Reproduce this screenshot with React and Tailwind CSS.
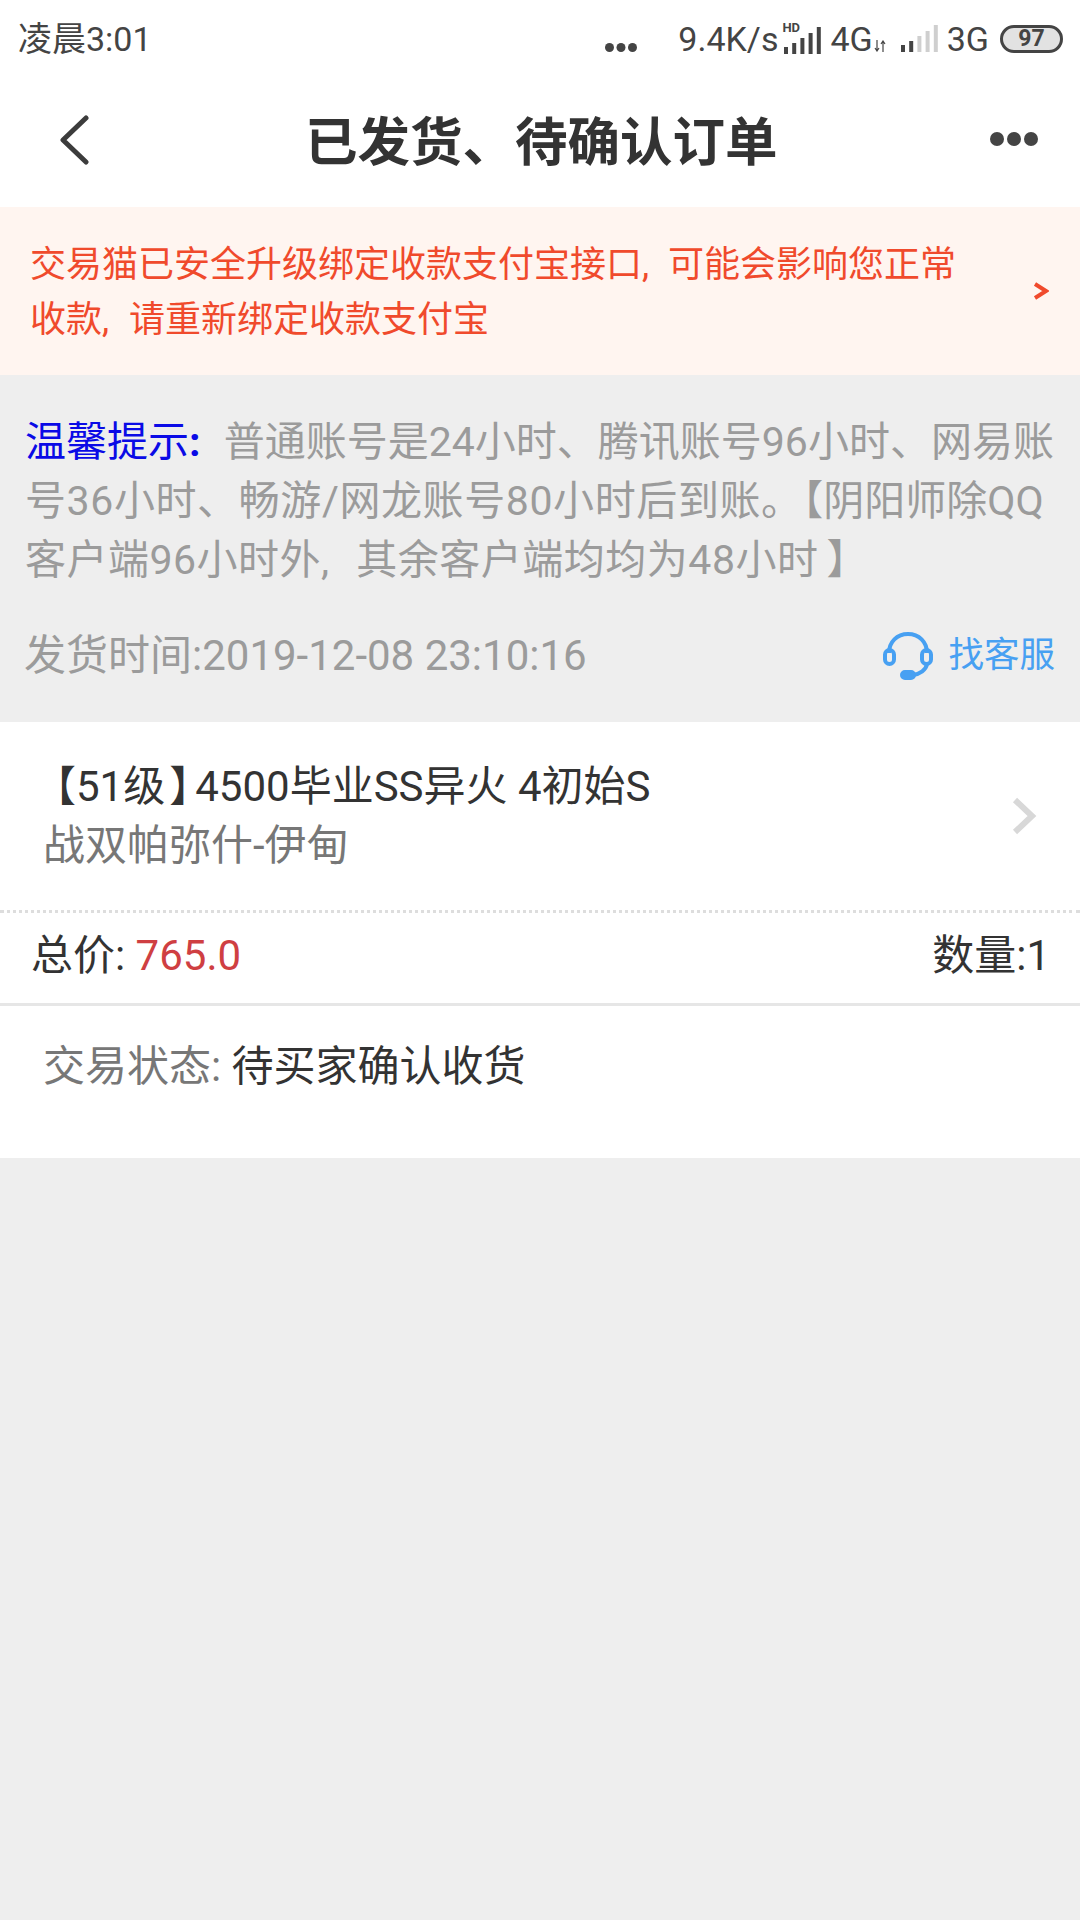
const font = { fontFamily: '"Roboto", "Noto Sans CJK SC", sans-serif' };

function Dots({ className, r, gap }) {
  const w = r * 6 + gap * 2;
  return (
    <svg className={className} width={w} height={r * 2} viewBox={`0 0 ${w} ${r * 2}`}>
      {[0, 1, 2].map((i) => (
        <circle key={i} cx={r + i * (2 * r + gap)} cy={r} r={r} fill="#444" />
      ))}
    </svg>
  );
}

function Signal({ on }) {
  const hs = [7, 11, 16, 21, 27];
  return (
    <svg width="38" height="27" viewBox="0 0 38 27">
      {hs.map((h, i) => (
        <rect key={i} x={i * 8.2} y={27 - h} width="4" height={h} fill={i < on ? "#444" : "#cfcfcf"} />
      ))}
    </svg>
  );
}

export default function App() {
  return (
    <div className="w-[1080px] h-[1920px] bg-[#eeeeee] flex flex-col" style={font}>
      <div className="h-[207px] bg-white flex flex-col">
        <div className="h-[68px] flex items-center pl-[18px] pr-[17px] text-[#444444]">
          <span className="text-[34px] leading-none mt-[9px]">凌晨3:01</span>
          <div className="ml-auto flex items-center mt-[9px]">
            <Dots r={4.5} gap={2.5} className="mr-[41px] mt-[18px]" />
            <span className="text-[34px] leading-none">9.4K/s</span>
            <div className="relative w-[40px] h-[30px] ml-[4px]">
              <span className="absolute left-0 top-[-3px] text-[13px] font-bold leading-none">HD</span>
              <div className="absolute right-0 bottom-0"><Signal on={5} /></div>
            </div>
            <span className="text-[34px] leading-none ml-[8px]">4G</span>
            <svg className="ml-[1px] mt-[14px]" width="12" height="12" viewBox="0 0 12 12">
              <path d="M3 0v11M1 8l2 3 2-3M9 12V1M7 4l2-3 2 3" stroke="#444" strokeWidth="1.2" fill="none" />
            </svg>
            <div className="ml-[15px]"><Signal on={2} /></div>
            <span className="text-[34px] leading-none ml-[8px]">3G</span>
            <div className="ml-[11px] w-[63px] h-[28px] border-[3px] border-[#444444] rounded-full bg-[#e2e2e2] flex items-center justify-center">
              <span className="text-[23px] font-bold leading-none">97</span>
            </div>
          </div>
        </div>
        <div className="flex-1 flex items-center relative">
          <svg className="ml-[58px] mt-[5px]" width="32" height="50" viewBox="0 0 32 50">
            <path d="M28 3 5 25l23 22" fill="none" stroke="#3c3c3c" strokeWidth="5" strokeLinecap="round" strokeLinejoin="round" />
          </svg>
          <span className="absolute left-[305px] top-[25px] text-[52.5px] font-bold leading-[100px] text-[#333333]">已发货、待确认订单</span>
          <Dots r={7} gap={3} className="ml-auto mr-[42px] mt-[3px]" />
        </div>
      </div>

      <div className="h-[168px] bg-[#fff5f0] flex items-center pl-[30px] pr-[31px] text-[#f04a2c]">
        <p className="text-[36px] leading-[55px] mt-[4px]">
          交易猫已安全升级绑定收款支付宝接口<span className="mr-[10px]">,</span> 可能会影响您正常<br />
          收款<span className="mr-[11px]">,</span> 请重新绑定收款支付宝
        </p>
        <svg className="ml-auto" width="16" height="18" viewBox="0 0 16 18">
          <path d="M2 2l11 7-11 7" fill="none" stroke="#f04a2c" strokeWidth="4" />
        </svg>
      </div>

      <div className="h-[347px] px-[25px] pt-[38px]">
        <p className="text-[41px] leading-[59px] text-[#9b9b9b] whitespace-nowrap">
          <span className="text-[#0a0ae6] mr-[13px]">温馨提示<span className="font-bold">:</span></span>{" "}
          普通账号是24小时、腾讯账号96小时、网易账<br />
          <span className="tracking-[0.6px]">号36小时、畅游/网龙账号80小时后到账。</span>
          <span className="[font-feature-settings:'halt']">【</span>阴阳师除QQ<br />
          <span className="tracking-[0.5px]">
            客户端96小时外<span className="mr-[16px]">,</span> 其余客户端均均为48小时
          </span>
          <span className="ml-[8px] [font-feature-settings:'halt']">】</span>
        </p>
        <div className="flex items-center mt-[36px] h-[60px]">
          <span className="text-[42px] text-[#9b9b9b] leading-none ml-[-1px]">发货时间:2019-12-08 23:10:16</span>
          <svg className="ml-auto" width="52" height="50" viewBox="0 0 52 50" fill="none" stroke="#47a0f2" strokeWidth="4">
            <path d="M7 22C7 11 15 3 26 3s19 8 19 19" />
            <rect x="3" y="19" width="9" height="14" rx="4.5" />
            <rect x="40" y="19" width="9" height="14" rx="4.5" />
            <path d="M45 33c-1 6-7 10-14 11" />
            <rect x="20" y="41" width="12" height="6" rx="3" fill="#47a0f2" />
          </svg>
          <span className="ml-[14px] text-[35.5px] text-[#47a0f2] leading-none">找客服</span>
        </div>
      </div>

      <div className="bg-white h-[436px] flex flex-col">
        <div className="h-[188px] flex items-center pl-[43px] pr-[42px]">
          <div className="text-[42px] leading-[59px] mb-[1px]">
            <div className="text-[#333333]">
              <span className="ml-[12px] [font-feature-settings:'halt']">【</span>51级<span className="ml-[4px] mr-[5px] [font-feature-settings:'halt']">】</span>4500毕业SS异火 4初始S
            </div>
            <div className="text-[#777777]">战双帕弥什-伊甸</div>
          </div>
          <svg className="ml-auto" width="26" height="38" viewBox="0 0 26 38">
            <path d="M3 3l17 16L3 35" fill="none" stroke="#d8d8d8" strokeWidth="6" />
          </svg>
        </div>
        <div className="border-t-[3px] border-dotted border-[#dddddd]" />
        <div className="h-[93px] flex items-center justify-between pl-[31px] pr-[30px] text-[42px] text-[#333333] leading-none border-b-[3px] border-[#e6e6e6]">
          <span className="mt-[-4px]">总价: <span className="text-[#cf3f42]">765.0</span></span>
          <span className="mt-[-4px]">数量:1</span>
        </div>
        <div className="pl-[43px] pt-[34px] text-[42px] leading-[54px]">
          <span className="text-[#777777]">交易状态: </span>
          <span className="text-[#333333]">待买家确认收货</span>
        </div>
      </div>
    </div>
  );
}
